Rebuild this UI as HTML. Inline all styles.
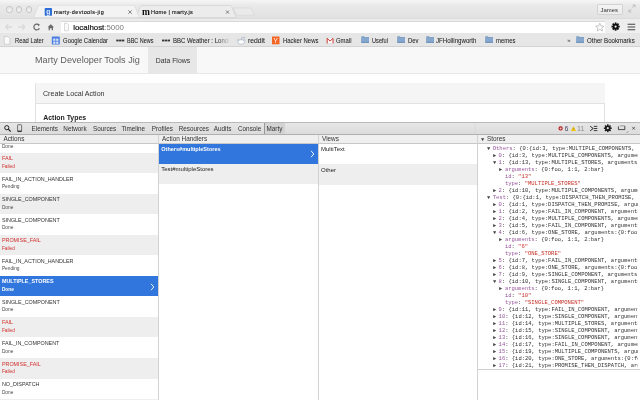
<!DOCTYPE html>
<html><head><meta charset="utf-8">
<style>
*{box-sizing:border-box;margin:0;padding:0}
html,body{width:640px;height:400px;overflow:hidden;background:#fff;-webkit-font-smoothing:antialiased;font-family:"Liberation Sans",sans-serif;color:#222}
.a{position:absolute;white-space:nowrap}
#tabstrip{position:absolute;left:0;top:0;width:640px;height:17.5px;background:linear-gradient(#f6f6f6,#e9e9e9 30%,#e2e2e2)}
.tl{position:absolute;top:6px;width:6.6px;height:6.6px;border-radius:50%;background:linear-gradient(#e4e4e4,#f6f6f6);border:0.6px solid #c4c4c4}
#toolbar{position:absolute;left:0;top:17.5px;width:640px;height:16px;background:linear-gradient(#ececec,#f0f0f0);border-top:0.5px solid #dcdcdc}
#omni{position:absolute;left:60.6px;top:20.6px;width:544.2px;height:12.4px;background:#fff;border-top:0.5px solid #d8d8d8}
#bmbar{position:absolute;left:0;top:33px;width:640px;height:14.3px;background:#e6e6e6;border-bottom:0.6px solid #d2d2d2}
.bm{position:absolute;white-space:nowrap;top:36.9px;font-size:6px;color:#222;line-height:7px;-webkit-text-stroke:0.05px #222;transform-origin:0 50%}
#page{position:absolute;left:0;top:47px;width:640px;height:75px;background:#fff}
#hdr{position:absolute;left:0;top:47px;width:640px;height:26.5px;background:#f8f8f8;border-bottom:0.6px solid #e7e7e7}
#dt{position:absolute;left:0;top:122px;width:640px;height:278px;background:#fff}
#dtbar{position:absolute;left:0;top:122px;width:640px;height:12.6px;background:linear-gradient(#e6e6e6,#dcdcdc);border-top:0.6px solid #b9b9b9;border-bottom:0.6px solid #b0b0b0}
.dtab{position:absolute;white-space:nowrap;top:124.6px;font-size:6.35px;color:#333;line-height:7px}
.colh{position:absolute;top:134.6px;height:9.1px;background:#efefef;border-bottom:0.6px solid #c8c8c8}
.colhtxt{position:absolute;white-space:nowrap;top:135.3px;font-size:6.4px;color:#333;line-height:7px}
.row{position:absolute;left:0;width:158px;height:20.6px}
.r1{position:absolute;left:1.9px;font-size:5.4px;line-height:6px;color:#333;white-space:nowrap}
.r2{position:absolute;left:1.9px;font-size:4.8px;line-height:5px;color:#4a4a4a;white-space:nowrap}
.fail{color:#d0312d}
.mono{font-family:"Liberation Mono",monospace;font-size:5.5px;line-height:7px;color:#222}
#wrap{position:absolute;left:0;top:0;width:640px;height:400px;will-change:transform}
</style></head><body><div id="wrap">
<div id="tabstrip"></div>
<div class="tl" style="left:6.1px"></div>
<div class="tl" style="left:15.65px"></div>
<div class="tl" style="left:25.8px"></div>
<svg class="a" style="left:0;top:0" width="640" height="20" viewBox="0 0 640 20">
 <path d="M136.5 17.5 L140.5 6 Q141 5.5 142 5.5 L230 5.5 Q231 5.5 231.5 6 L236 17.5 Z" fill="#ececec" stroke="#c9c9c9" stroke-width="0.5"/>
 <path d="M33.8 17.5 L38.3 6 Q38.8 5.3 40 5.3 L133 5.3 Q134.2 5.3 134.7 6 L139.2 17.5 Z" fill="#f3f3f3" stroke="#d2d2d2" stroke-width="0.5"/>
 <path d="M233.5 8 L249.5 8 Q251 8 251.5 9 L254.5 14.5 Q255 15.2 254 15.2 L237.5 15.2 Q236.6 15.2 236.3 14.5 Z" fill="#eaeaea" stroke="#cfcfcf" stroke-width="0.5"/>
 <rect x="44.7" y="8.1" width="7.3" height="7.6" rx="0.6" fill="#2d6ed6"/>
 <text x="46.3" y="13.6" font-family="Liberation Sans" font-weight="bold" font-size="6.6" fill="#e8f0ff">g</text>
 <path d="M128.3 10.3 L131.8 13.8 M131.8 10.3 L128.3 13.8" stroke="#666" stroke-width="0.8"/>
 <path d="M226 10.5 L229 13.7 M229 10.5 L226 13.7" stroke="#666" stroke-width="0.8"/>
 <path d="M628.5 12 L631.5 9 M629 9.5 L629 12 L631.5 12 M635 4.8 L632 7.8 M632.5 5 L635 5 L635 7.5" stroke="#aaa" stroke-width="0.6" fill="none"/>
</svg>
<div class="a" style="left:54px;top:8.6px;font-size:5.5px;line-height:7px;color:#111;letter-spacing:0.37px;-webkit-text-stroke:0.12px #111">marty-devtools-jig</div>
<div class="a" style="left:142px;top:7.6px;font-size:9.5px;line-height:8px;font-weight:bold;color:#111;letter-spacing:-0.6px;font-family:'Liberation Serif',serif">m</div>
<div class="a" style="left:151px;top:8.6px;font-size:5.5px;line-height:7px;color:#111;letter-spacing:0.27px;-webkit-text-stroke:0.12px #111">Home | marty.js</div>
<div class="a" style="left:597px;top:3.8px;width:25.8px;height:11.7px;border:0.5px solid #d2d2d2;border-radius:1.2px;background:linear-gradient(#f4f4f4,#ebebeb)"></div>
<div class="a" style="left:600.5px;top:6.9px;font-size:5.94px;line-height:7px;color:#333">James</div>
<div id="toolbar"></div>
<div id="omni"></div>
<svg class="a" style="left:0;top:17px" width="640" height="17" viewBox="0 17 640 17">
 <path d="M5.5 27 L12 27 M5.5 27 L8.3 24.2 M5.5 27 L8.3 29.8" stroke="#dadada" stroke-width="1.3" fill="none"/>
 <path d="M25 27 L18.3 27 M25 27 L22.2 24.2 M25 27 L22.2 29.8" stroke="#dadada" stroke-width="1.3" fill="none"/>
 <path d="M38.9 25 A2.9 2.9 0 1 0 39.4 28.2" stroke="#6a6a6a" stroke-width="1.2" fill="none"/>
 <path d="M37.2 23.6 L39.8 24.6 L38.6 26.6 Z" fill="#6a6a6a"/>
 <path d="M47.6 27.3 L50.8 24.2 L54 27.3 L53 27.3 L53 30.3 L51.7 30.3 L51.7 28.2 L49.9 28.2 L49.9 30.3 L48.6 30.3 L48.6 27.3 Z" fill="#6a6a6a"/>
 <path d="M64.5 23.2 L67 23.2 L68.5 24.7 L68.5 30.8 L64.5 30.8 Z" fill="#fafafa" stroke="#b8b8b8" stroke-width="0.5"/>
 <path d="M599.8 23.2 L601 26 L604 26.2 L601.7 28.1 L602.5 31 L599.8 29.4 L597.1 31 L597.9 28.1 L595.6 26.2 L598.6 26 Z" fill="#fff" stroke="#9a9a9a" stroke-width="0.55"/>
 <g transform="translate(615.6 26.6)" fill="#111">
  <circle r="2.9"/>
  <rect x="-0.9" y="-4.1" width="1.8" height="8.2"/>
  <rect x="-0.9" y="-4.1" width="1.8" height="8.2" transform="rotate(45)"/>
  <rect x="-0.9" y="-4.1" width="1.8" height="8.2" transform="rotate(90)"/>
  <rect x="-0.9" y="-4.1" width="1.8" height="8.2" transform="rotate(135)"/>
  <circle r="1.1" fill="#f2f2f2"/>
 </g>
 <path d="M627.6 24.3 L635.2 24.3 M627.6 27 L635.2 27 M627.6 29.7 L635.2 29.7" stroke="#444" stroke-width="1.1"/>
</svg>
<div class="a" style="left:73.2px;top:22.6px;font-size:7.88px;line-height:9px;color:#111"><span style="-webkit-text-stroke:0.2px #111">localhost</span><span style="color:#7a7a7a">:5000</span></div>
<div id="bmbar"></div>
<svg class="a" style="left:0;top:33px" width="640" height="14" viewBox="0 33 640 14">
 <path d="M4.3 36.6 L7.8 36.6 L9.9 38.7 L9.9 44.2 L4.3 44.2 Z" fill="#fbfbfb" stroke="#b5b5b5" stroke-width="0.5"/>
 <rect x="51.8" y="36.5" width="8" height="8" rx="0.6" fill="#4a7ee0"/>
 <rect x="53.2" y="38.6" width="2.2" height="2.2" fill="#fff" opacity="0.8"/><rect x="56.2" y="38.6" width="2.2" height="2.2" fill="#fff" opacity="0.8"/><rect x="53.2" y="41.6" width="2.2" height="2.2" fill="#fff" opacity="0.8"/><rect x="56.2" y="41.6" width="2.2" height="2.2" fill="#fff" opacity="0.8"/>
 <rect x="116.3" y="39.6" width="2.4" height="1.8" fill="#333"/><rect x="119.1" y="39.6" width="2.4" height="1.8" fill="#333"/><rect x="121.9" y="39.6" width="2.4" height="1.8" fill="#333"/>
 <rect x="162" y="39.6" width="2.4" height="1.8" fill="#333"/><rect x="164.8" y="39.6" width="2.4" height="1.8" fill="#333"/><rect x="167.6" y="39.6" width="2.4" height="1.8" fill="#333"/>
 <circle cx="238.2" cy="40.2" r="0.9" fill="#fff" stroke="#8a9bb0" stroke-width="0.45"/><circle cx="244.2" cy="40.2" r="0.9" fill="#fff" stroke="#8a9bb0" stroke-width="0.45"/>
 <ellipse cx="241.2" cy="42" rx="3.4" ry="2.3" fill="#fff" stroke="#8a9bb0" stroke-width="0.5"/>
 <path d="M241.2 39.7 L242 37.2 L244 37.6" stroke="#8a9bb0" stroke-width="0.45" fill="none"/><circle cx="244.4" cy="37.6" r="0.6" fill="#fff" stroke="#8a9bb0" stroke-width="0.4"/>
 <rect x="272" y="36.5" width="7.5" height="7.8" fill="#f26522"/>
 <text x="273.4" y="43" font-family="Liberation Sans" font-size="6.4" fill="#fff">Y</text>
 <rect x="326.6" y="38" width="7" height="5.4" fill="#fff" stroke="#ccc" stroke-width="0.4"/><path d="M327.2 43.4 L327.2 38.4 L330.1 41 L333 38.4 L333 43.4" stroke="#c5261d" stroke-width="0.9" fill="none"/>
</svg>
<div class="bm" style="left:14.6px;font-size:6.7px;transform:scaleX(0.866)">Read Later</div>
<div class="bm" style="left:62.6px;font-size:6.7px;transform:scaleX(0.890)">Google Calendar</div>
<div class="bm" style="left:126.75px;font-size:6.7px;transform:scaleX(0.818)">BBC News</div>
<div class="bm" style="left:247.5px;font-size:6.7px;transform:scaleX(1.014)">reddit</div>
<div class="bm" style="left:282.5px;font-size:6.7px;transform:scaleX(0.891)">Hacker News</div>
<div class="bm" style="left:336.25px;font-size:6.7px;transform:scaleX(0.886)">Gmail</div>
<div class="bm" style="left:371.5px;font-size:6.7px;transform:scaleX(0.843)">Useful</div>
<div class="bm" style="left:407.5px;font-size:6.7px;transform:scaleX(0.881)">Dev</div>
<div class="bm" style="left:436.25px;font-size:6.7px;transform:scaleX(0.914)">JFHollingworth</div>
<div class="bm" style="left:495.5px;font-size:6.7px;transform:scaleX(0.888)">memes</div>
<div class="bm" style="left:586.7px;font-size:6.7px;transform:scaleX(0.917)">Other Bookmarks</div>
<div class="bm" style="left:172.5px;font-size:6.7px;transform:scaleX(0.9);width:63px;overflow:hidden;-webkit-mask-image:linear-gradient(90deg,#000 78%,transparent)">BBC Weather : London</div>
<div class="bm" style="left:567.2px;font-size:6px;color:#555">»</div>
<svg class="a" style="left:360.5px;top:36.2px" width="8.3" height="7" viewBox="0 0 8.3 7"><path d="M0.3 0.3 L3 0.3 L3.6 1 L8 1 L8 6.8 L0.3 6.8 Z" fill="#7d9fc4"/><rect x="0.3" y="1.8" width="7.7" height="5" fill="#86a8cf"/><rect x="0.3" y="5.8" width="7.7" height="1" fill="#6d90b8"/></svg>
<svg class="a" style="left:397px;top:36.2px" width="8.3" height="7" viewBox="0 0 8.3 7"><path d="M0.3 0.3 L3 0.3 L3.6 1 L8 1 L8 6.8 L0.3 6.8 Z" fill="#7d9fc4"/><rect x="0.3" y="1.8" width="7.7" height="5" fill="#86a8cf"/><rect x="0.3" y="5.8" width="7.7" height="1" fill="#6d90b8"/></svg>
<svg class="a" style="left:426.25px;top:36.2px" width="8.3" height="7" viewBox="0 0 8.3 7"><path d="M0.3 0.3 L3 0.3 L3.6 1 L8 1 L8 6.8 L0.3 6.8 Z" fill="#7d9fc4"/><rect x="0.3" y="1.8" width="7.7" height="5" fill="#86a8cf"/><rect x="0.3" y="5.8" width="7.7" height="1" fill="#6d90b8"/></svg>
<svg class="a" style="left:485px;top:36.2px" width="8.3" height="7" viewBox="0 0 8.3 7"><path d="M0.3 0.3 L3 0.3 L3.6 1 L8 1 L8 6.8 L0.3 6.8 Z" fill="#7d9fc4"/><rect x="0.3" y="1.8" width="7.7" height="5" fill="#86a8cf"/><rect x="0.3" y="5.8" width="7.7" height="1" fill="#6d90b8"/></svg>
<svg class="a" style="left:576.4px;top:36.2px" width="8.3" height="7" viewBox="0 0 8.3 7"><path d="M0.3 0.3 L3 0.3 L3.6 1 L8 1 L8 6.8 L0.3 6.8 Z" fill="#7d9fc4"/><rect x="0.3" y="1.8" width="7.7" height="5" fill="#86a8cf"/><rect x="0.3" y="5.8" width="7.7" height="1" fill="#6d90b8"/></svg>
<div id="page"></div>
<div id="hdr"></div>
<div class="a" style="left:35px;top:54.5px;font-size:9.14px;line-height:11px;color:#5e5e5e">Marty Developer Tools Jig</div>
<div class="a" style="left:147.5px;top:47px;width:49.8px;height:26px;background:#e7e7e7"></div>
<div class="a" style="left:155.7px;top:56.5px;font-size:6.9px;line-height:8px;color:#333">Data Flows</div>
<div class="a" style="left:35.3px;top:82.8px;width:569.5px;height:50px;border:0.7px solid #e2e2e2;background:#fff"></div>
<div class="a" style="left:36px;top:83.3px;width:568.5px;height:21.2px;background:#f5f5f5;border-bottom:0.7px solid #e2e2e2"></div>
<div class="a" style="left:43px;top:90px;font-size:7.1px;line-height:8px;color:#333">Create Local Action</div>
<div class="a" style="left:43.3px;top:113.8px;font-size:6.9px;line-height:8px;font-weight:bold;color:#222">Action Types</div>

<div id="dt"></div>
<div id="dtbar"></div>
<svg class="a" style="left:0;top:122px" width="640" height="12" viewBox="0 122 640 12">
 <circle cx="6.8" cy="127.7" r="2.1" fill="none" stroke="#222" stroke-width="1"/>
 <path d="M8.4 129.3 L10.8 131.6" stroke="#222" stroke-width="1.2"/>
 <rect x="17.6" y="124.7" width="4" height="6.9" rx="0.6" fill="none" stroke="#444" stroke-width="0.7"/>
 <rect x="17.6" y="130.6" width="4" height="1.1" fill="#222"/>
 <circle cx="560.6" cy="128.4" r="2.6" fill="#f6c8c8"/>
 <circle cx="560.6" cy="128.4" r="1.55" fill="none" stroke="#a02626" stroke-width="1.1"/>
 <path d="M570.8 131 L573.45 126.2 L576.1 131 Z" fill="#f0c419"/>
 <path d="M573.45 127.8 L573.45 129.6" stroke="#8a6d00" stroke-width="0.5"/>
 <path d="M590.2 126.2 L593.2 128.5 L590.2 130.8" stroke="#111" stroke-width="0.9" fill="none"/>
 <path d="M593.8 126.4 L597.3 126.4 M593.8 128.5 L597.3 128.5 M593.8 130.6 L597.3 130.6" stroke="#111" stroke-width="0.8"/>
 <g transform="translate(607.8 128.2)" fill="#1a1a1a">
  <circle r="2.8"/>
  <rect x="-0.75" y="-3.9" width="1.5" height="7.8"/>
  <rect x="-0.75" y="-3.9" width="1.5" height="7.8" transform="rotate(45)"/>
  <rect x="-0.75" y="-3.9" width="1.5" height="7.8" transform="rotate(90)"/>
  <rect x="-0.75" y="-3.9" width="1.5" height="7.8" transform="rotate(135)"/>
  <circle r="1.1" fill="#dcdcdc"/>
 </g>
 <path d="M618.4 126.4 L618.4 129.6 L624.8 129.6 L624.8 126" stroke="#222" stroke-width="0.8" fill="none"/>
 <path d="M619.8 125.9 L624.8 125.9" stroke="#888" stroke-width="0.8"/>
 <path d="M627 132.6 L628 131.6" stroke="#222" stroke-width="0.7"/>
 <path d="M632.3 126.9 L634.9 129.6 M634.9 126.9 L632.3 129.6" stroke="#333" stroke-width="0.7"/>
 <path d="M475.2 122.5 L475.2 133.5" stroke="#cfcfcf" stroke-width="0.5"/>
</svg>
<div class="a" style="left:564.7px;top:124.6px;font-size:6.3px;line-height:7px;color:#3a3f55">6</div>
<div class="a" style="left:577.3px;top:124.6px;font-size:6.3px;line-height:7px;color:#888;letter-spacing:0.3px">11</div>
<div class="dtab" style="left:31.6px">Elements</div>
<div class="dtab" style="left:63.3px">Network</div>
<div class="dtab" style="left:93px">Sources</div>
<div class="dtab" style="left:121.4px">Timeline</div>
<div class="dtab" style="left:151.7px">Profiles</div>
<div class="dtab" style="left:178.7px">Resources</div>
<div class="dtab" style="left:213.8px">Audits</div>
<div class="dtab" style="left:238px">Console</div>
<div class="a" style="left:264.3px;top:122.6px;width:20.9px;height:11.5px;background:#d3d3d3;border-left:0.6px solid #999"></div>
<div class="dtab" style="left:266.5px">Marty</div>


<div class="r2" style="top:143.80px">Done</div>
<div class="row" style="top:152.50px;background:#eeeeee"></div>
<div class="r1 fail" style="top:155.03px">FAIL</div>
<div class="r2 fail" style="top:163.60px">Failed</div>
<div class="row" style="top:173.05px;background:#ffffff"></div>
<div class="r1" style="top:175.58px">FAIL_IN_ACTION_HANDLER</div>
<div class="r2" style="top:184.15px">Pending</div>
<div class="row" style="top:193.60px;background:#eeeeee"></div>
<div class="r1" style="top:196.13px">SINGLE_COMPONENT</div>
<div class="r2" style="top:204.70px">Done</div>
<div class="row" style="top:214.15px;background:#ffffff"></div>
<div class="r1" style="top:216.68px">SINGLE_COMPONENT</div>
<div class="r2" style="top:225.25px">Done</div>
<div class="row" style="top:234.70px;background:#eeeeee"></div>
<div class="r1 fail" style="top:237.23px">PROMISE_FAIL</div>
<div class="r2 fail" style="top:245.80px">Failed</div>
<div class="row" style="top:255.25px;background:#ffffff"></div>
<div class="r1" style="top:257.78px">FAIL_IN_ACTION_HANDLER</div>
<div class="r2" style="top:266.35px">Pending</div>
<div class="row" style="top:275.80px;background:#3176dc"></div>
<div class="r1" style="top:278.33px;color:#fff;font-weight:bold">MULTIPLE_STORES</div>
<div class="r2" style="top:286.90px;color:#fff;font-weight:bold">Done</div>
<div class="row" style="top:296.35px;background:#ffffff"></div>
<div class="r1" style="top:298.88px">SINGLE_COMPONENT</div>
<div class="r2" style="top:307.45px">Done</div>
<div class="row" style="top:316.90px;background:#eeeeee"></div>
<div class="r1 fail" style="top:319.43px">FAIL</div>
<div class="r2 fail" style="top:328.00px">Failed</div>
<div class="row" style="top:337.45px;background:#ffffff"></div>
<div class="r1" style="top:339.98px">FAIL_IN_COMPONENT</div>
<div class="r2" style="top:348.55px">Done</div>
<div class="row" style="top:358.00px;background:#eeeeee"></div>
<div class="r1 fail" style="top:360.53px">PROMISE_FAIL</div>
<div class="r2 fail" style="top:369.10px">Failed</div>
<div class="row" style="top:378.55px;background:#ffffff"></div>
<div class="r1" style="top:381.08px">NO_DISPATCH</div>
<div class="r2" style="top:389.65px">Done</div>
<div class="row" style="top:399.1px;background:#eeeeee"></div>
<svg class="a" style="left:150px;top:282.80px" width="5" height="8" viewBox="0 0 5 8"><path d="M1 0.8 L3.8 4 L1 7.2" stroke="#fff" stroke-width="0.9" fill="none"/></svg>
<div class="a" style="left:159.1px;top:143.75px;width:159.2px;height:20.3px;background:#3176dc"></div>
<div class="a" style="left:161.25px;top:145.9px;font-size:5.54px;line-height:6px;font-weight:bold;color:#fff">Others#multipleStores</div>
<svg class="a" style="left:309.5px;top:150px" width="5" height="8" viewBox="0 0 5 8"><path d="M1 0.8 L3.8 4 L1 7.2" stroke="#fff" stroke-width="0.9" fill="none"/></svg>
<div class="a" style="left:159.1px;top:164.1px;width:159.2px;height:20.4px;background:#eeeeee"></div>
<div class="a" style="left:161.25px;top:166.2px;font-size:6px;line-height:6px;color:#222">Test#multipleStores</div>
<div class="a" style="left:321px;top:146.2px;font-size:6px;line-height:6px;color:#222">MultiText</div>
<div class="a" style="left:318.9px;top:164.4px;width:158.4px;height:20.4px;background:#eeeeee"></div>
<div class="a" style="left:321px;top:166.9px;font-size:6px;line-height:6px;color:#222">Other</div>
<div class="a" style="left:478px;top:143.75px;width:159.5px;height:256px;overflow:hidden">
<svg class="a" style="left:9.25px;top:2.90px" width="3.2" height="3.2" viewBox="0 0 3.2 3.2"><path d="M0 0.3 L3.2 0.3 L1.6 3.1 Z" fill="#444"/></svg>
<div class="a mono" style="left:14.75px;top:1.00px"><span style="color:#96549c">Others</span>: <span style="color:#333">{0:{id:3, type:MULTIPLE_COMPONENTS, arguments:{0:foo, 1:1, 2:bar}}, 1:{id:13}}</span></div>
<svg class="a" style="left:15.10px;top:10.10px" width="3.2" height="3.2" viewBox="0 0 3.2 3.2"><path d="M0.2 0 L3.1 1.6 L0.2 3.2 Z" fill="#444"/></svg>
<div class="a mono" style="left:20.60px;top:8.00px"><span style="color:#96549c">0</span>: <span style="color:#333">{id:3, type:MULTIPLE_COMPONENTS, arguments:{0:foo, 1:1, 2:bar}}</span></div>
<svg class="a" style="left:15.10px;top:16.90px" width="3.2" height="3.2" viewBox="0 0 3.2 3.2"><path d="M0 0.3 L3.2 0.3 L1.6 3.1 Z" fill="#444"/></svg>
<div class="a mono" style="left:20.60px;top:15.00px"><span style="color:#96549c">1</span>: <span style="color:#333">{id:13, type:MULTIPLE_STORES, arguments:{0:foo, 1:1, 2:bar}}</span></div>
<svg class="a" style="left:21.40px;top:24.10px" width="3.2" height="3.2" viewBox="0 0 3.2 3.2"><path d="M0.2 0 L3.1 1.6 L0.2 3.2 Z" fill="#444"/></svg>
<div class="a mono" style="left:26.90px;top:22.00px"><span style="color:#96549c">arguments</span>: <span style="color:#333">{0:foo, 1:1, 2:bar}</span></div>
<div class="a mono" style="left:26.90px;top:29.00px"><span style="color:#96549c">id</span>: <span style="color:#c62f26">"13"</span></div>
<div class="a mono" style="left:26.90px;top:36.00px"><span style="color:#96549c">type</span>: <span style="color:#c62f26">"MULTIPLE_STORES"</span></div>
<svg class="a" style="left:15.10px;top:45.10px" width="3.2" height="3.2" viewBox="0 0 3.2 3.2"><path d="M0.2 0 L3.1 1.6 L0.2 3.2 Z" fill="#444"/></svg>
<div class="a mono" style="left:20.60px;top:43.00px"><span style="color:#96549c">2</span>: <span style="color:#333">{id:10, type:MULTIPLE_COMPONENTS, arguments:{0:foo, 1:1, 2:bar}}</span></div>
<svg class="a" style="left:9.25px;top:51.90px" width="3.2" height="3.2" viewBox="0 0 3.2 3.2"><path d="M0 0.3 L3.2 0.3 L1.6 3.1 Z" fill="#444"/></svg>
<div class="a mono" style="left:14.75px;top:50.00px"><span style="color:#96549c">Test</span>: <span style="color:#333">{0:{id:1, type:DISPATCH_THEN_PROMISE, arguments:{0:foo}}}</span></div>
<svg class="a" style="left:15.10px;top:59.10px" width="3.2" height="3.2" viewBox="0 0 3.2 3.2"><path d="M0.2 0 L3.1 1.6 L0.2 3.2 Z" fill="#444"/></svg>
<div class="a mono" style="left:20.60px;top:57.00px"><span style="color:#96549c">0</span>: <span style="color:#333">{id:1, type:DISPATCH_THEN_PROMISE, arguments:{0:foo, 1:1, 2:bar}}</span></div>
<svg class="a" style="left:15.10px;top:66.10px" width="3.2" height="3.2" viewBox="0 0 3.2 3.2"><path d="M0.2 0 L3.1 1.6 L0.2 3.2 Z" fill="#444"/></svg>
<div class="a mono" style="left:20.60px;top:64.00px"><span style="color:#96549c">1</span>: <span style="color:#333">{id:2, type:FAIL_IN_COMPONENT, arguments:{0:foo, 1:1, 2:bar}}</span></div>
<svg class="a" style="left:15.10px;top:73.10px" width="3.2" height="3.2" viewBox="0 0 3.2 3.2"><path d="M0.2 0 L3.1 1.6 L0.2 3.2 Z" fill="#444"/></svg>
<div class="a mono" style="left:20.60px;top:71.00px"><span style="color:#96549c">2</span>: <span style="color:#333">{id:4, type:MULTIPLE_COMPONENTS, arguments:{0:foo, 1:1, 2:bar}}</span></div>
<svg class="a" style="left:15.10px;top:80.10px" width="3.2" height="3.2" viewBox="0 0 3.2 3.2"><path d="M0.2 0 L3.1 1.6 L0.2 3.2 Z" fill="#444"/></svg>
<div class="a mono" style="left:20.60px;top:78.00px"><span style="color:#96549c">3</span>: <span style="color:#333">{id:5, type:FAIL_IN_COMPONENT, arguments:{0:foo, 1:1, 2:bar}}</span></div>
<svg class="a" style="left:15.10px;top:86.90px" width="3.2" height="3.2" viewBox="0 0 3.2 3.2"><path d="M0 0.3 L3.2 0.3 L1.6 3.1 Z" fill="#444"/></svg>
<div class="a mono" style="left:20.60px;top:85.00px"><span style="color:#96549c">4</span>: <span style="color:#333">{id:6, type:ONE_STORE, arguments:{0:foo, 1:1, 2:bar}}</span></div>
<svg class="a" style="left:21.40px;top:94.10px" width="3.2" height="3.2" viewBox="0 0 3.2 3.2"><path d="M0.2 0 L3.1 1.6 L0.2 3.2 Z" fill="#444"/></svg>
<div class="a mono" style="left:26.90px;top:92.00px"><span style="color:#96549c">arguments</span>: <span style="color:#333">{0:foo, 1:1, 2:bar}</span></div>
<div class="a mono" style="left:26.90px;top:99.00px"><span style="color:#96549c">id</span>: <span style="color:#c62f26">"6"</span></div>
<div class="a mono" style="left:26.90px;top:106.00px"><span style="color:#96549c">type</span>: <span style="color:#c62f26">"ONE_STORE"</span></div>
<svg class="a" style="left:15.10px;top:115.10px" width="3.2" height="3.2" viewBox="0 0 3.2 3.2"><path d="M0.2 0 L3.1 1.6 L0.2 3.2 Z" fill="#444"/></svg>
<div class="a mono" style="left:20.60px;top:113.00px"><span style="color:#96549c">5</span>: <span style="color:#333">{id:7, type:FAIL_IN_COMPONENT, arguments:{0:foo, 1:1, 2:bar}}</span></div>
<svg class="a" style="left:15.10px;top:122.10px" width="3.2" height="3.2" viewBox="0 0 3.2 3.2"><path d="M0.2 0 L3.1 1.6 L0.2 3.2 Z" fill="#444"/></svg>
<div class="a mono" style="left:20.60px;top:120.00px"><span style="color:#96549c">6</span>: <span style="color:#333">{id:8, type:ONE_STORE, arguments:{0:foo, 1:1, 2:bar}}</span></div>
<svg class="a" style="left:15.10px;top:129.10px" width="3.2" height="3.2" viewBox="0 0 3.2 3.2"><path d="M0.2 0 L3.1 1.6 L0.2 3.2 Z" fill="#444"/></svg>
<div class="a mono" style="left:20.60px;top:127.00px"><span style="color:#96549c">7</span>: <span style="color:#333">{id:9, type:SINGLE_COMPONENT, arguments:{0:foo, 1:1, 2:bar}}</span></div>
<svg class="a" style="left:15.10px;top:135.90px" width="3.2" height="3.2" viewBox="0 0 3.2 3.2"><path d="M0 0.3 L3.2 0.3 L1.6 3.1 Z" fill="#444"/></svg>
<div class="a mono" style="left:20.60px;top:134.00px"><span style="color:#96549c">8</span>: <span style="color:#333">{id:10, type:SINGLE_COMPONENT, arguments:{0:foo, 1:1, 2:bar}}</span></div>
<svg class="a" style="left:21.40px;top:143.10px" width="3.2" height="3.2" viewBox="0 0 3.2 3.2"><path d="M0.2 0 L3.1 1.6 L0.2 3.2 Z" fill="#444"/></svg>
<div class="a mono" style="left:26.90px;top:141.00px"><span style="color:#96549c">arguments</span>: <span style="color:#333">{0:foo, 1:1, 2:bar}</span></div>
<div class="a mono" style="left:26.90px;top:148.00px"><span style="color:#96549c">id</span>: <span style="color:#c62f26">"10"</span></div>
<div class="a mono" style="left:26.90px;top:155.00px"><span style="color:#96549c">type</span>: <span style="color:#c62f26">"SINGLE_COMPONENT"</span></div>
<svg class="a" style="left:15.10px;top:164.10px" width="3.2" height="3.2" viewBox="0 0 3.2 3.2"><path d="M0.2 0 L3.1 1.6 L0.2 3.2 Z" fill="#444"/></svg>
<div class="a mono" style="left:20.60px;top:162.00px"><span style="color:#96549c">9</span>: <span style="color:#333">{id:11, type:FAIL_IN_COMPONENT, arguments:{0:foo, 1:1, 2:bar}}</span></div>
<svg class="a" style="left:15.10px;top:171.10px" width="3.2" height="3.2" viewBox="0 0 3.2 3.2"><path d="M0.2 0 L3.1 1.6 L0.2 3.2 Z" fill="#444"/></svg>
<div class="a mono" style="left:20.60px;top:169.00px"><span style="color:#96549c">10</span>: <span style="color:#333">{id:12, type:SINGLE_COMPONENT, arguments:{0:foo, 1:1, 2:bar}}</span></div>
<svg class="a" style="left:15.10px;top:178.10px" width="3.2" height="3.2" viewBox="0 0 3.2 3.2"><path d="M0.2 0 L3.1 1.6 L0.2 3.2 Z" fill="#444"/></svg>
<div class="a mono" style="left:20.60px;top:176.00px"><span style="color:#96549c">11</span>: <span style="color:#333">{id:14, type:MULTIPLE_STORES, arguments:{0:foo, 1:1, 2:bar}}</span></div>
<svg class="a" style="left:15.10px;top:185.10px" width="3.2" height="3.2" viewBox="0 0 3.2 3.2"><path d="M0.2 0 L3.1 1.6 L0.2 3.2 Z" fill="#444"/></svg>
<div class="a mono" style="left:20.60px;top:183.00px"><span style="color:#96549c">12</span>: <span style="color:#333">{id:15, type:SINGLE_COMPONENT, arguments:{0:foo, 1:1, 2:bar}}</span></div>
<svg class="a" style="left:15.10px;top:192.10px" width="3.2" height="3.2" viewBox="0 0 3.2 3.2"><path d="M0.2 0 L3.1 1.6 L0.2 3.2 Z" fill="#444"/></svg>
<div class="a mono" style="left:20.60px;top:190.00px"><span style="color:#96549c">13</span>: <span style="color:#333">{id:16, type:SINGLE_COMPONENT, arguments:{0:foo, 1:1, 2:bar}}</span></div>
<svg class="a" style="left:15.10px;top:199.10px" width="3.2" height="3.2" viewBox="0 0 3.2 3.2"><path d="M0.2 0 L3.1 1.6 L0.2 3.2 Z" fill="#444"/></svg>
<div class="a mono" style="left:20.60px;top:197.00px"><span style="color:#96549c">14</span>: <span style="color:#333">{id:17, type:FAIL_IN_COMPONENT, arguments:{0:foo, 1:1, 2:bar}}</span></div>
<svg class="a" style="left:15.10px;top:206.10px" width="3.2" height="3.2" viewBox="0 0 3.2 3.2"><path d="M0.2 0 L3.1 1.6 L0.2 3.2 Z" fill="#444"/></svg>
<div class="a mono" style="left:20.60px;top:204.00px"><span style="color:#96549c">15</span>: <span style="color:#333">{id:19, type:MULTIPLE_COMPONENTS, arguments:{0:foo, 1:1, 2:bar}}</span></div>
<svg class="a" style="left:15.10px;top:213.10px" width="3.2" height="3.2" viewBox="0 0 3.2 3.2"><path d="M0.2 0 L3.1 1.6 L0.2 3.2 Z" fill="#444"/></svg>
<div class="a mono" style="left:20.60px;top:211.00px"><span style="color:#96549c">16</span>: <span style="color:#333">{id:20, type:ONE_STORE, arguments:{0:foo, 1:1, 2:bar}}</span></div>
<svg class="a" style="left:15.10px;top:220.10px" width="3.2" height="3.2" viewBox="0 0 3.2 3.2"><path d="M0.2 0 L3.1 1.6 L0.2 3.2 Z" fill="#444"/></svg>
<div class="a mono" style="left:20.60px;top:218.00px"><span style="color:#96549c">17</span>: <span style="color:#333">{id:21, type:PROMISE_THEN_DISPATCH, arguments:{0:foo, 1:1, 2:bar}}</span></div>
</div>
<div class="colh" style="left:0;width:158.5px"></div>
<div class="colh" style="left:159px;width:159.5px"></div>
<div class="colh" style="left:319px;width:158.5px"></div>
<div class="colh" style="left:478px;width:162px"></div>
<div class="colhtxt" style="left:3.4px">Actions</div>
<div class="colhtxt" style="left:162px">Action Handlers</div>
<div class="colhtxt" style="left:322px">Views</div>
<svg class="a" style="left:481.3px;top:137.6px" width="3.2" height="3.2" viewBox="0 0 3.2 3.2"><path d="M0 0.3 L3.2 0.3 L1.6 3.1 Z" fill="#444"/></svg>
<div class="colhtxt" style="left:487px">Stores</div>
<div class="a" style="left:157.9px;top:134.6px;width:1px;height:266px;background:#d2d2d2"></div>
<div class="a" style="left:317.9px;top:134.6px;width:1px;height:266px;background:#d2d2d2"></div>
<div class="a" style="left:477px;top:134.6px;width:1px;height:266px;background:#d2d2d2"></div>
<div class="a" style="left:478px;top:369.2px;width:162px;height:0.6px;background:#cfcfcf"></div>
</div></body></html>
